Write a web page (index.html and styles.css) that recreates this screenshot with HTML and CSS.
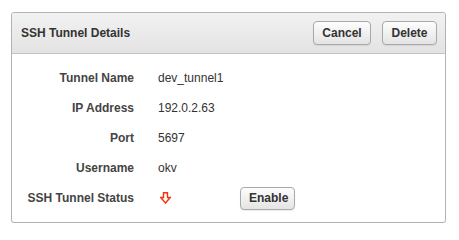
FILE: index.html
```html
<!DOCTYPE html>
<html>
<head>
<meta charset="utf-8">
<link rel="stylesheet" href="styles.css">
</head>
<body>
<div class="panel">
  <div class="panel-header">
    <span class="title">SSH Tunnel Details</span>
    <div class="actions">
      <button class="btn btn-cancel">Cancel</button>
      <button class="btn btn-delete">Delete</button>
    </div>
  </div>
  <div class="panel-body">
    <div class="row"><div class="label">Tunnel Name</div><div class="value">dev_tunnel1</div></div>
    <div class="row"><div class="label">IP Address</div><div class="value">192.0.2.63</div></div>
    <div class="row"><div class="label">Port</div><div class="value">5697</div></div>
    <div class="row"><div class="label">Username</div><div class="value">okv</div></div>
    <div class="row">
      <div class="label">SSH Tunnel Status</div>
      <div class="value status">
        <svg class="arrow" width="11" height="12" viewBox="0 0 11 12"><polygon points="3.5,0.7 7.5,0.7 7.5,5.5 10.2,5.5 5.5,11 0.8,5.5 3.5,5.5" fill="none" stroke="#f2340e" stroke-width="1.4" stroke-linejoin="miter"/></svg>
        <button class="btn btn-enable">Enable</button>
      </div>
    </div>
  </div>
</div>
</body>
</html>
```
FILE: styles.css
```css
html, body {
  margin: 0;
  background: #ffffff;
}
body {
  padding: 12px 13px 0 11px;
  font-family: "Liberation Sans", Arial, Helvetica, sans-serif;
  font-size: 12px;
  color: #333;
}
.panel {
  width: 435px;
  box-sizing: border-box;
  border: 1px solid #b3b3b3;
  border-radius: 3px;
  background: #fff;
  box-shadow: 0 1px 1px rgba(0,0,0,0.08);
}
.panel-header {
  height: 40px;
  display: flex;
  align-items: center;
  justify-content: space-between;
  padding: 0 8px 0 9px;
  background: linear-gradient(#f2f2f2, #e3e3e3);
  border-bottom: 1px solid #c4c4c4;
  border-radius: 3px 3px 0 0;
}
.title {
  font-weight: bold;
  color: #333;
}
.actions {
  display: flex;
  gap: 11px;
}
.btn {
  font-family: "Liberation Sans", Arial, Helvetica, sans-serif;
  font-size: 12px;
  font-weight: bold;
  color: #333;
  height: 24px;
  padding: 0 8px;
  border: 1px solid #a9a9a9;
  border-radius: 4px;
  background: linear-gradient(#fdfdfd, #e4e4e4);
  box-shadow: 0 1px 1px rgba(0,0,0,0.08);
  cursor: pointer;
}
.btn-cancel { width: 58px; }
.btn-delete { width: 55px; }
.btn-enable { width: 55px; height: 23px; margin-left: 69px; }
.panel-body {
  padding: 9px 0 9px 0;
}
.row {
  display: grid;
  grid-template-columns: 122px 1fr;
  column-gap: 24px;
  height: 30px;
  align-items: center;
}
.label {
  text-align: right;
  font-weight: bold;
  color: #444;
}
.value {
  color: #333;
}
.status {
  display: flex;
  align-items: center;
}
.arrow {
  margin-left: 2px;
  display: block;
}
```
